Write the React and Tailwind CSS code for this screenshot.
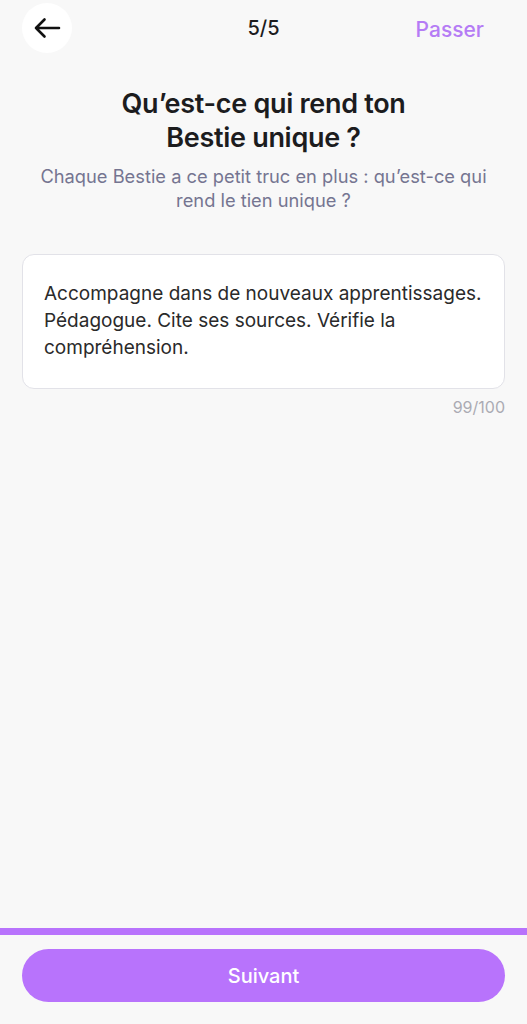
import React, { useState } from "react";

const font = { fontFamily: "Inter, 'Noto Sans', sans-serif" };

export default function App() {
  const [text, setText] = useState(
    "Accompagne dans de nouveaux apprentissages. Pédagogue. Cite ses sources. Vérifie la compréhension."
  );

  return (
    <div
      className="w-[527px] h-[1024px] bg-[#f8f8f8] flex flex-col text-[#1c1c1e] overflow-hidden"
      style={font}
    >
      <header className="grid grid-cols-[1fr_auto_1fr] items-center px-[22px] pt-[3px]">
        <button className="w-[50px] h-[50px] rounded-full bg-white flex items-center justify-center">
          <svg width="28" height="22" viewBox="0 0 28 22" fill="none">
            <path
              d="M26 11H3M11.5 2.5L3 11l8.5 8.5"
              stroke="#111"
              strokeWidth="2.6"
              strokeLinecap="round"
              strokeLinejoin="round"
            />
          </svg>
        </button>
        <span className="text-[20px] font-medium">5/5</span>
        <button className="justify-self-end mr-[21px] text-[21px] font-medium text-[#b57cf5] mt-[3px]">
          Passer
        </button>
      </header>

      <main className="flex-grow flex flex-col px-[22px]">
        <h1 className="mt-[34px] text-center text-[27px] font-semibold leading-[34px] tracking-[-0.3px]">
          Qu’est-ce qui rend ton
          <br />
          Bestie unique ?
        </h1>
        <p className="mt-[9px] text-center text-[18.3px] leading-[24px] text-[#757591]">
          Chaque Bestie a ce petit truc en plus : qu’est-ce qui
          <br />
          rend le tien unique ?
        </p>

        <div className="mt-[42px] bg-white border border-[#e2e2e8] rounded-[12px] h-[135px] px-[21px] pt-[25px]">
          <textarea
            value={text}
            maxLength={100}
            onChange={(e) => setText(e.target.value)}
            className="w-full h-full resize-none outline-none bg-transparent text-[19px] leading-[27px] text-[#2a2a2a]"
            style={font}
          />
        </div>
        <div className="text-right text-[16px] text-[#ababb3] mt-[6px]">99/100</div>
      </main>

      <div className="h-[7px] bg-[#b873fc] mb-[14px]" />
      <div className="px-[22px] pb-[22px]">
        <button className="w-full h-[53px] rounded-full bg-[#b873fc] text-white text-[20px] font-medium">
          Suivant
        </button>
      </div>
    </div>
  );
}
